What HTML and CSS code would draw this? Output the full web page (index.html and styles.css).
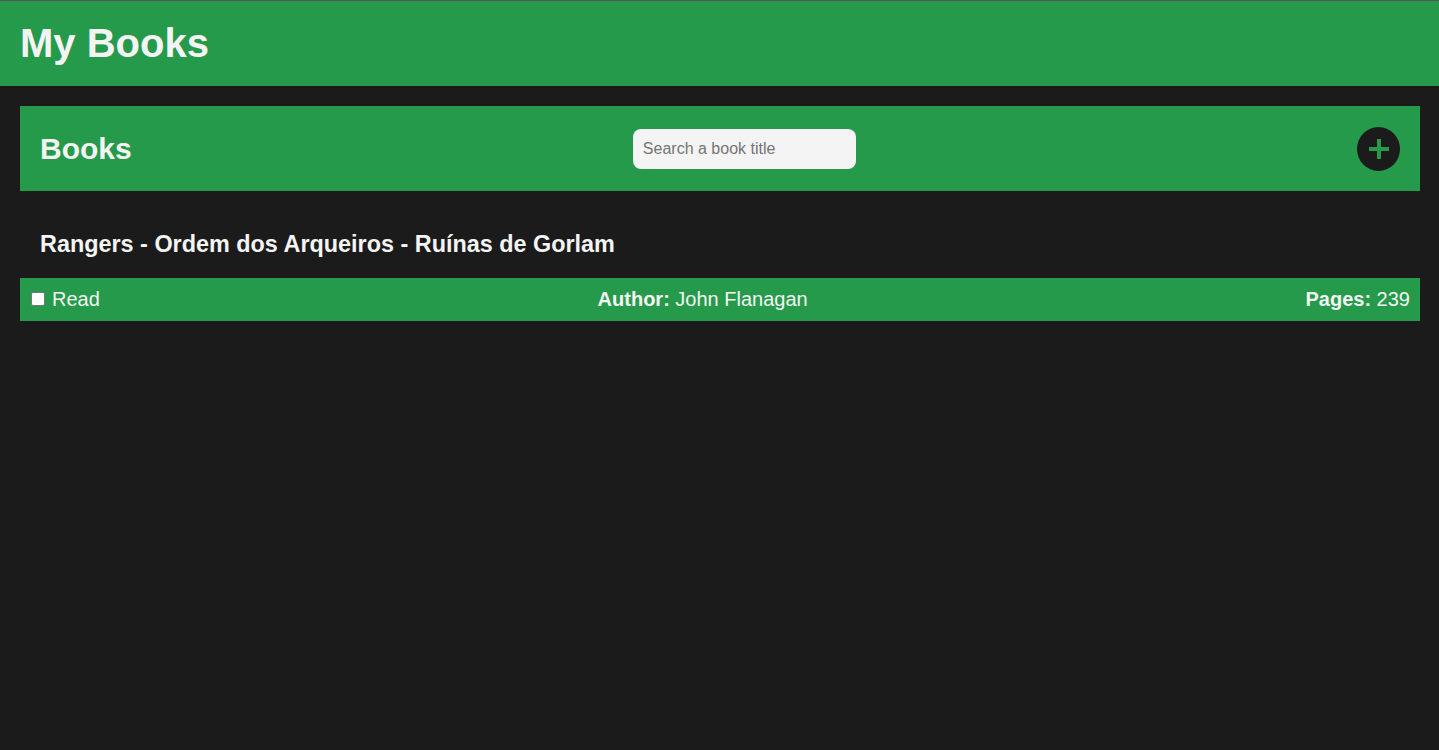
FILE: index.html
```html
<!DOCTYPE html>
<html lang="en">
<head>
<meta charset="utf-8">
<title>My Books</title>
<link rel="stylesheet" href="styles.css">
</head>
<body>
<header class="topbar">
  <h1 class="app-title">My Books</h1>
</header>
<main class="content">
  <section class="books-bar">
    <h2 class="books-title">Books</h2>
    <input class="search" type="text" placeholder="Search a book title">
    <button class="add-btn" aria-label="Add book">
      <svg width="20" height="20" viewBox="0 0 20 20"><path d="M10 0v20M0 10h20" stroke="#259a4a" stroke-width="4" fill="none"/></svg>
    </button>
  </section>
  <article class="book">
    <h3 class="book-title">Rangers - Ordem dos Arqueiros - Ruínas de Gorlam</h3>
    <div class="book-info">
      <label class="read"><input type="checkbox" class="read-check">Read</label>
      <span class="author"><b>Author:</b> John Flanagan</span>
      <span class="pages"><b>Pages:</b> 239</span>
    </div>
  </article>
</main>
</body>
</html>
```
FILE: styles.css
```css
* { box-sizing: border-box; }
html, body { margin: 0; padding: 0; }
body {
  background: #1b1b1b;
  color: #f4f4f4;
  font-family: "Liberation Sans", Arial, sans-serif;
  min-height: 750px;
}
.topbar {
  border-top: 1px solid #555;
  background: #259a4a;
  height: 86px;
  display: flex;
  align-items: center;
  padding: 0 20px;
}
.app-title {
  margin: 0;
  font-size: 40px;
  font-weight: bold;
}
.content { padding: 20px 19px 20px 20px; }
.books-bar {
  background: #259a4a;
  height: 85px;
  display: flex;
  align-items: center;
  justify-content: space-between;
  padding: 0 20px;
}
.books-title {
  margin: 0;
  font-size: 30px;
  font-weight: bold;
}
.search {
  width: 223px;
  height: 40px;
  border: none;
  border-radius: 8px;
  background: #f4f4f4;
  padding: 0 10px;
  font-family: "Liberation Sans", Arial, sans-serif;
  font-size: 16px;
  color: #333;
  outline: none;
}
.search::placeholder { color: #757575; }
.add-btn {
  width: 43px;
  height: 44px;
  border-radius: 50%;
  border: none;
  background: #1b1b1b;
  padding: 0;
  display: flex;
  align-items: center;
  justify-content: center;
}
.book-title {
  margin: 0;
  padding: 40px 20px 20px;
  font-size: 23.4px;
  font-weight: bold;
  line-height: 27px;
}
.book-info {
  background: #259a4a;
  display: flex;
  justify-content: space-between;
  align-items: center;
  height: 43px;
  padding: 0 10px;
  font-size: 20px;
  line-height: 23px;
}
.read { display: flex; align-items: center; height: 23px; }
.read-check {
  appearance: none;
  -webkit-appearance: none;
  margin: 0 7px 2px 1px;
  width: 14px;
  height: 14px;
  background: #fff;
  border: 1px solid #767676;
  border-radius: 2px;
}
```
